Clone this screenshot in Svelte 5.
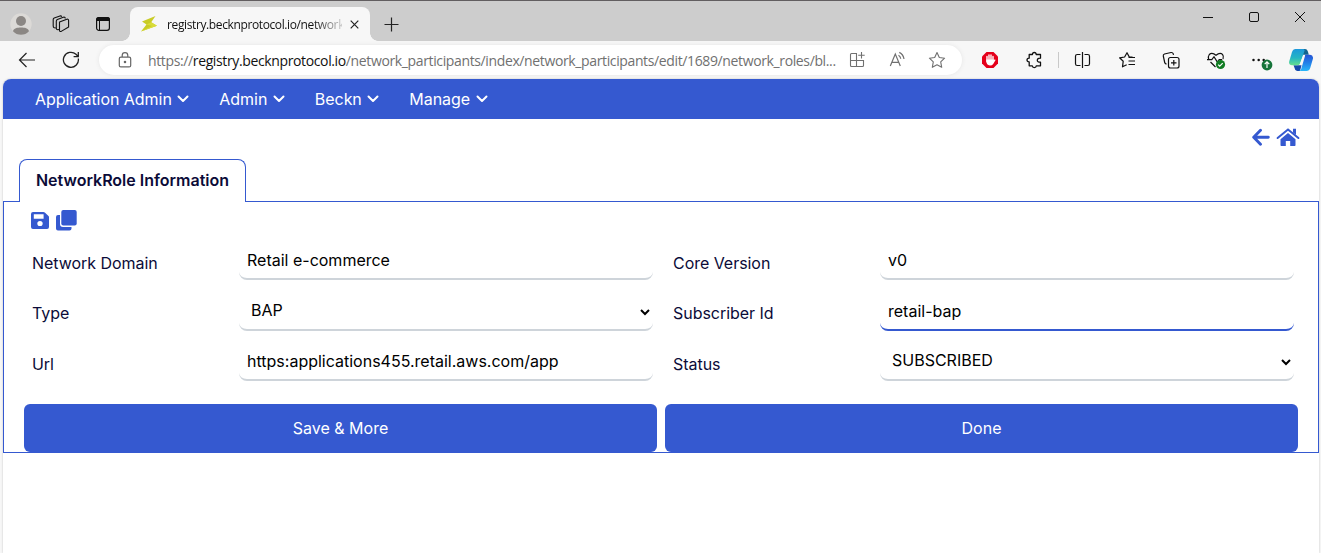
<script>
  const menus = ['Application Admin', 'Admin', 'Beckn', 'Manage'];
  const fields = [
    { label: 'Network Domain', value: 'Retail e-commerce' },
    { label: 'Core Version', value: 'v0' },
    { label: 'Type', value: 'BAP', select: true },
    { label: 'Subscriber Id', value: 'retail-bap', active: true },
    { label: 'Url', value: 'https:applications455.retail.aws.com/app' },
    { label: 'Status', value: 'SUBSCRIBED', select: true }
  ];
</script>

<div class="window">
  <header class="titlebar">
    <div class="left-tools">
      <svg width="22" height="22" viewBox="0 0 22 22"><circle cx="11" cy="11" r="10.7" fill="#dcdad7"/><circle cx="11" cy="8" r="5" fill="#8b8784"/><path d="M3 18.2C4 15.3 7 14.6 11 14.6s7 .7 8 3.6A10.700 10.700 0 0 1 3 18.200z" fill="#8b8784"/></svg>
      <svg class="workspaces" width="18" height="18" viewBox="0 0 18 18" fill="none" stroke="#111" stroke-width="1.1" stroke-linejoin="round"><path d="M7.500 7 14.800 4.200Q16.600 3.800 16.600 5.500V12L9.200 16.400Q7.500 17 7.500 15.200z"/><path d="M7 14.500 5.800 14.800Q4.300 14.700 4.300 13.200V6Q4.400 5 5.400 4.500L11.300 2.200Q13 1.800 13.300 3.500M4 13 2.300 12.800Q1.200 12.300 1.200 11V4.500Q1.200 3.400 2.200 3L8 .9Q9.300.6 9.800 1.800"/></svg>
      <svg class="tabs-icon" width="16" height="16" viewBox="0 0 16 16"><rect x="1.600" y="1.600" width="12.800" height="12.800" rx="2.400" fill="none" stroke="#111" stroke-width="1.200"/><path d="M1 5V3.500Q1 1 3.500 1h9Q15 1 15 3.500V5z" fill="#111"/><path d="M4.500 5v9" stroke="#111"/></svg>
    </div>
    <div class="browser-tab">
      <svg width="18" height="18" viewBox="0 0 18 18"><path d="M15.500 1 2 6.500 6.500 9.500 1 16.500 17 10.800 11.200 7.300z" fill="#c9cc27"/><path d="M11.200 7.300 17 10.800 1 16.500l11-5.600-5.500-1.400z" fill="#d9dc39"/></svg>
      <span class="tab-title">registry.becknprotocol.io/network</span>
      <svg class="close" width="9" height="9" viewBox="0 0 9 9"><path d="M.7.7l7.600 7.600M8.300.7.7 8.300" stroke="#222" stroke-width="1.200"/></svg>
    </div>
    <svg class="plus" width="15" height="15" viewBox="0 0 15 15"><path d="M7.500.5v14M.5 7.500h14" stroke="#222" stroke-width="1.200"/></svg>
    <div class="window-buttons">
      <svg width="12" height="12" viewBox="0 0 12 12"><path d="M1 6.500h10" stroke="#111"/></svg>
      <svg width="12" height="12" viewBox="0 0 12 12"><rect x="1.500" y="1.500" width="9" height="9" rx="1.500" fill="none" stroke="#111"/></svg>
      <svg width="12" height="12" viewBox="0 0 12 12"><path d="M1 1l10 10M11 1 1 11" stroke="#111"/></svg>
    </div>
  </header>

  <div class="toolbar">
    <svg class="back" width="18" height="16" viewBox="0 0 18 16" fill="none" stroke="#222" stroke-width="1.200"><path d="M17 8H1.500M8.500 1l-7 7 7 7"/></svg>
    <svg class="reload" width="18" height="18" viewBox="0 0 18 18" fill="none" stroke="#222" stroke-width="1.300"><path d="M16.300 7.500A7.500 7.500 0 1 1 14 3.300L16 5.400M16.300 1v4.700h-4.700"/></svg>
    <div class="address">
      <svg class="lock" width="14" height="16" viewBox="0 0 14 16" fill="none" stroke="#666" stroke-width="1.200"><rect x="1.300" y="5.200" width="11.400" height="9.700" rx="1.500"/><path d="M4.200 5V3.500a2.800 2.800 0 0 1 5.600 0V5"/><circle cx="7" cy="10" r=".7" fill="#555"/></svg>
      <span class="url">https://<b>registry.becknprotocol.io</b>/network_participants/index/network_participants/edit/1689/network_roles/bl...</span>
      <svg class="apps" width="24" height="24" viewBox="0 0 24 24" fill="none" stroke="#707070" stroke-width="1.100"><path d="M12 5.500H6.500Q5.500 5.500 5.500 6.500v11q0 1 1 1h11q1 0 1-1V12.500H5.500M11.500 5.500v13M16.500 4v6.500M13.200 7.300h6.500"/></svg>
      <svg width="24" height="24" viewBox="0 0 24 24" fill="none" stroke="#707070" stroke-width="1.200"><path d="M5.300 18 10.300 6l5 12M7 14.300h6.600M13.500 7.200q2 1.200 2.200 3.600M14.300 4.400q4 2 4.700 6.600"/></svg>
      <svg width="24" height="24" viewBox="0 0 24 24" fill="none" stroke="#707070" stroke-width="1.100" stroke-linejoin="round"><path d="M12 4.500l2.300 5 5.300.7-3.900 3.700 1 5.400-4.700-2.600-4.700 2.600 1-5.400-3.900-3.700 5.300-.7z"/></svg>
    </div>
    <svg class="blocker" width="24" height="24" viewBox="0 0 24 24"><path d="M8.500 4h7L20 8.500v7L15.500 20h-7L4 15.500v-7z" fill="#e5001b"/><path d="M9 8.500v5M11 7v6M13 7v6M15 8.500v5" stroke="#fff" stroke-width="1.400" stroke-linecap="round"/><path d="M8.300 11.500h7.400v1l1.100-1.300.8.700-2.400 4Q14.200 17.500 12 17.500 8.300 17 8.300 13z" fill="#fff"/></svg>
    <svg class="puzzle" width="24" height="24" viewBox="0 0 24 24" fill="none" stroke="#111" stroke-width="1.300" stroke-linejoin="round"><path d="M7.200 6.500h3.200Q10.500 4.500 12.300 4.500t1.900 2h4.300v3.700q-3.200-.2-3.200 2t3.200 2v3.600h-4.200q-.1 1.800-2 1.800t-2-1.800H7.200v-3.800Q5 13.900 5 12.100t2.200-1.900z"/></svg>
    <i class="divider"></i>
    <svg class="split" width="24" height="24" viewBox="0 0 24 24" fill="none" stroke="#111" stroke-width="1.200"><path d="M10.500 6.500H7.300q-1.800 0-1.800 1.800v7.400q0 1.800 1.800 1.800h3.200M14.500 6.500h3.200q1.800 0 1.800 1.800v7.400q0 1.800-1.800 1.800h-3.200M12.500 4v16"/></svg>
    <svg class="favorites" width="24" height="24" viewBox="0 0 24 24" fill="none" stroke="#111" stroke-width="1.200" stroke-linejoin="round"><path d="M17.500 9.200 14.200 8.900 12 4.700 9.600 9l-5 .8 3.600 3.500-.7 5.500 4.200-2M13.500 9.500H20M13.500 13H20M13.500 16.500H20"/></svg>
    <svg class="collections" width="24" height="24" viewBox="0 0 24 24" fill="none" stroke="#111" stroke-width="1.200"><rect x="9.500" y="9.500" width="10.500" height="10.500" rx="2"/><path d="M14.800 12v5.500M12 14.800h5.500M7.500 16.200Q6 15.800 5.700 14.500L4.300 8Q4 6.500 5.500 6L12 4.500q1.800-.2 2.300 1.400l.2 1"/></svg>
    <svg class="health" width="24" height="24" viewBox="0 0 24 24"><path d="M4.700 11.500Q3.700 8.500 5.300 6.500 8 3.800 12 7.200 16 3.800 18.500 6.400 20 8.300 19 11M6.500 14l5 5M3 11.600h4.800L10 8.700l3.400 5.400 1.800-2.500h3" fill="none" stroke="#111" stroke-width="1.200"/><circle cx="16.500" cy="16.500" r="4.600" fill="#107c22"/><path d="M14.200 16.700l1.500 1.500 3-3" fill="none" stroke="#fff" stroke-width="1.200"/></svg>
    <svg class="more" width="24" height="24" viewBox="0 0 24 24"><g fill="#111"><circle cx="4.500" cy="12" r="1.250"/><circle cx="9.700" cy="12" r="1.250"/><circle cx="14.700" cy="12" r="1.250"/></g><circle cx="18" cy="17" r="5.400" fill="#16743a"/><path d="M18 20v-6M15.700 16.200 18 13.900l2.300 2.300" fill="none" stroke="#fff" stroke-width="1.200"/></svg>
    <svg class="copilot" width="24" height="24" viewBox="0 0 24 24">
      <defs><linearGradient id="lg" x1="0" y1="0" x2="0" y2="1"><stop stop-color="#1d98db"/><stop offset=".55" stop-color="#25b5c4"/><stop offset="1" stop-color="#64df8d"/></linearGradient><linearGradient id="rg" x1="0" y1="0" x2="0" y2="1"><stop stop-color="#2553d4"/><stop offset=".5" stop-color="#2280e8"/><stop offset="1" stop-color="#28b6f8"/></linearGradient></defs>
      <path d="M13 1h3q2 0 2.700 2l1.100 3.800H14z" fill="#12638e"/><path d="M4.500 17.200h8L11 23H8.500q-1.800 0-2.500-1.800z" fill="#1648aa"/>
      <path d="M6.500 1H14q2 0 1.500 1.800L11.200 15.500Q10.600 17.200 8.600 17.200H3Q-.3 17.200.2 13.500L3 4Q4 1 6.500 1z" fill="url(#lg)"/>
      <path d="M16.200 6.800H21q3.300.2 3 3.700l-2.700 9.200Q20.300 23 17.500 23H9.500q2 0 2.700-2l3.500-12z" fill="url(#rg)"/>
      <path d="M14.200 7.500h1.500L12 16.800h-1.500z" fill="#f7f7f7"/>
    </svg>
  </div>

  <main class="page">
    <nav>
      {#each menus as menu}
        <span class="menu">{menu}<svg width="12" height="8" viewBox="0 0 12 8"><path d="M1.500 1.500 6 6l4.500-4.500" fill="none" stroke="#fff" stroke-width="2" stroke-linecap="round" stroke-linejoin="round"/></svg></span>
      {/each}
    </nav>
    <div class="page-actions">
      <svg width="18" height="18" viewBox="0 0 18 18" fill="none" stroke="#3559d0" stroke-width="2.900" stroke-linecap="round" stroke-linejoin="round"><path d="M16.300 9.300H2M8.500 2.300 1.700 9.300l6.800 7"/></svg>
      <svg width="24" height="18" viewBox="0 0 24 18" fill="#3559d0"><path fill-rule="evenodd" d="M12 5 19.500 11.300v5.900q0 .8-.8.800h-4.500v-5H9.800v5H5.300q-.8 0-.8-.8v-5.900z"/><path d="M1.600 10 12 1.500 22.400 10" fill="none" stroke="#3559d0" stroke-width="2" stroke-linecap="round"/><path d="M17 .8h3V7l-3-2.500z"/></svg>
    </div>
    <div class="tabs"><div class="tab">NetworkRole Information</div></div>
    <section class="panel">
      <div class="record-actions">
        <svg width="18" height="17" viewBox="0 0 18 18" preserveAspectRatio="none"><path fill-rule="evenodd" d="M2 0h10.500q.8 0 1.300.5l3.700 3.700q.5.5.5 1.300V16q0 2-2 2H2q-2 0-2-2V2Q0 0 2 0zM2.800 2.500v4.700h9.800V2.500zM9 9.500a2.700 2.700 0 1 0 0 5.400 2.700 2.700 0 0 0 0-5.400z" fill="#3559d0"/></svg>
        <svg width="21" height="21" viewBox="0 0 21 21" fill="#3559d0"><rect x="5.300" y="0" width="15.400" height="15.500" rx="2"/><path d="M4 5v9q0 3 3 3h8.500v1.500q0 2-2 2H2q-2 0-2-2V7q0-2 2-2z"/></svg>
      </div>
      <div class="fields">
        {#each fields as field, i}
          <label class="field">
            <span class="name" class:middle={i === 2 || i === 3}>{field.label}</span>
            {#if field.select}
              <select class="control"><option>{field.value}</option></select>
            {:else}
              <input class="control" class:active={field.active} type="text" value={field.value} />
            {/if}
          </label>
        {/each}
      </div>
      <div class="buttons">
        <button>Save &amp; More</button>
        <button>Done</button>
      </div>
    </section>
  </main>
</div>

<style>
  :global(body) { margin: 0; overflow: hidden; }
  * { box-sizing: border-box; }
  svg { display: block; flex: none; }
  .window { width: 1321px; height: 553px; background: #f7f7f7; font-family: Inter, sans-serif; overflow: hidden; display: flex; flex-direction: column; }
  .titlebar { height: 41px; flex: none; border-top: 1px solid #625e60; background: #cdcdcd; display: flex; }
  .left-tools { width: 130px; padding: 5px 0 0 10px; display: flex; align-items: center; }
  .workspaces { margin-left: 20px; }
  .tabs-icon { margin-left: 25px; }
  .browser-tab { position: relative; width: 240px; margin-top: 6px; padding: 0 11px 0 10px; background: #f7f7f7; border-radius: 8px 8px 0 0; display: flex; align-items: center; font: 12px "Open Sans", sans-serif; color: #111; }
  .browser-tab::before, .browser-tab::after { content: ''; position: absolute; bottom: 0; width: 8px; height: 8px; }
  .browser-tab::before { left: -8px; background: radial-gradient(circle at 0 0, transparent 7.500px, #f7f7f7 8px); }
  .browser-tab::after { right: -8px; background: radial-gradient(circle at 100% 0, transparent 7.500px, #f7f7f7 8px); }
  .tab-title { margin-left: 9px; width: 175px; overflow: hidden; white-space: nowrap; letter-spacing: -.38px; mask-image: linear-gradient(to right, #000 145px, transparent 182px); }
  .close { margin-left: 8px; }
  .plus { margin: 16px 0 0 14px; }
  .window-buttons { display: flex; gap: 34px; margin: 10px 15px 0 auto; }

  .toolbar { height: 38px; flex: none; display: flex; align-items: center; }
  .back { margin-left: 18px; }
  .reload { margin-left: 26px; }
  .address { margin-left: 19px; width: 863px; height: 30px; border-radius: 15px; background: #fff; box-shadow: 0 0 4px #e5e5e5; display: flex; align-items: center; }
  .lock { margin-left: 19px; }
  .url { margin-left: 16px; width: 697px; white-space: nowrap; font: 14px "Open Sans", sans-serif; letter-spacing: -.37px; color: #707070; }
  .url b { font-weight: 400; color: #111; }
  .address .apps ~ svg { margin-left: 16px; }
  .blocker { margin-left: 16px; }
  .puzzle { margin-left: 20px; }
  .divider { margin-left: 12px; width: 1px; height: 16px; background: #c9c9c9; }
  .split { margin-left: 11px; }
  .favorites, .health, .more { margin-left: 21px; }
  .collections { margin-left: 20px; }
  .copilot { margin-left: 16px; }

  .page { flex: 1; margin: 0 2px 0 3px; background: #fff; border-radius: 8px 8px 0 0; overflow: hidden; box-shadow: 0 0 2px #bbb; }
  nav { height: 40px; background: #3559d0; color: #fff; display: flex; align-items: center; gap: 30px; padding-left: 32px; font-size: 16px; letter-spacing: -.04px; }
  .menu { display: flex; align-items: center; gap: 5.500px; }
  .page-actions { height: 40px; display: flex; justify-content: flex-end; gap: 6px; padding: 9px 19px 0 0; }
  .tabs { position: relative; height: 43px; padding-left: 16px; margin-bottom: -1px; }
  .tab { width: 227px; height: 43px; border: 1px solid #3559d0; border-bottom: 0; border-radius: 8px 8px 0 0; background: #fff; color: #0b0b38; font-size: 16px; font-weight: 600; line-height: 40px; text-align: center; white-space: nowrap; }
  .panel { height: 252px; border: 1px solid #3559d0; padding: 8px 20px 0; }
  .record-actions { height: 32px; padding-left: 7px; display: flex; gap: 6.500px; }
  .record-actions svg:first-child { margin-top: 2px; }
  .fields { height: 162px; display: grid; grid-template-columns: 633px 633px; column-gap: 8px; grid-template-rows: 51px 50px 38px; }
  .field { display: flex; padding: 0 4px 0 8px; height: 38px; color: #0b0b38; font-size: 16px; }
  .name { width: 207px; line-height: 42px; letter-spacing: -.04px; }
  .name.middle { line-height: 40px; }
  .control { width: 414px; height: 38px; border: 0; border-bottom: 2px solid #ced4da; border-radius: 8px; background: #fff; padding: 0 8px; font: 16px Inter, sans-serif; color: #000; outline: none; }
  select.control { padding: 0 0 2px 8px; }
  .control.active { border-bottom-color: #3559d0; }
  .buttons { display: grid; grid-template-columns: 633px 633px; gap: 8px; }
  button { height: 48px; border: 0; border-radius: 6px; background: #3559d0; color: #fff; font: 16px Inter, sans-serif; }
</style>
